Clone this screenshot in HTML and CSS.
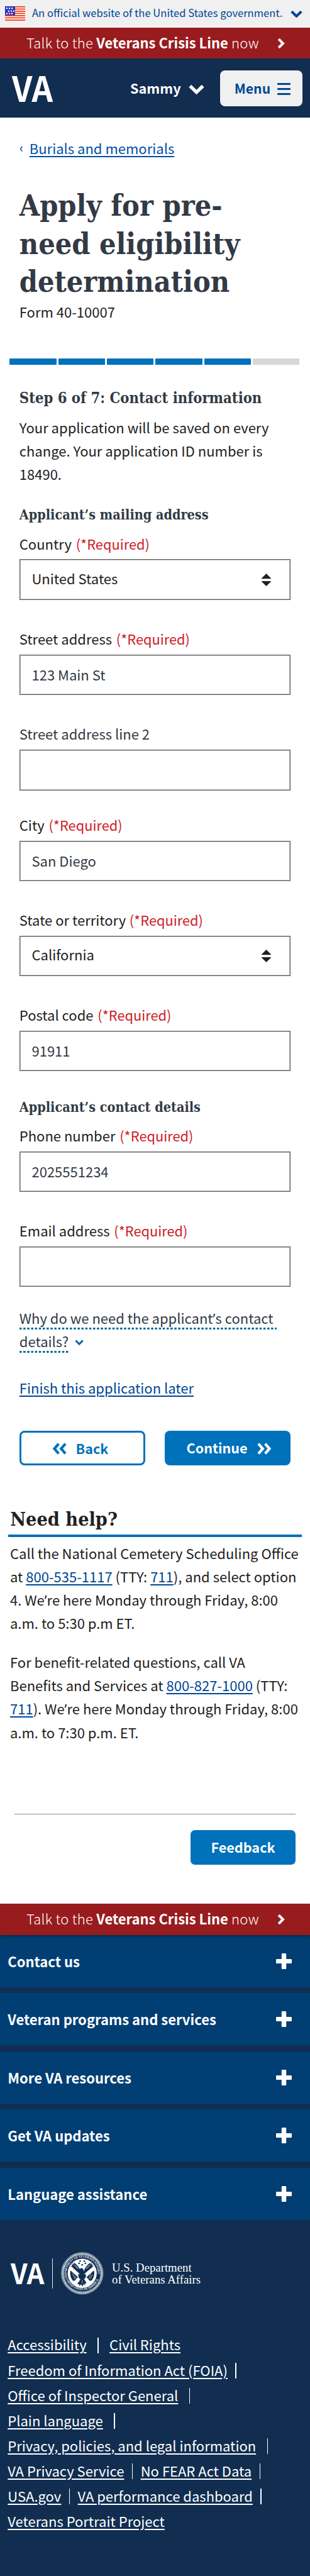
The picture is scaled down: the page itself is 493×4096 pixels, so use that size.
FILE: index.html
```html
<!DOCTYPE html>
<html lang="en">
<head>
<meta charset="utf-8">
<title>Apply for pre-need eligibility determination | Veterans Affairs</title>
<link rel="stylesheet" href="styles.css">
</head>
<body>
<svg class="defs" aria-hidden="true">
  <symbol id="chev-right" viewBox="0 0 12 18"><path d="M2.200 2.200 9 9l-6.800 6.800" fill="none" stroke="currentColor" stroke-width="4"/></symbol>
  <symbol id="chev-down" viewBox="0 0 25 16"><path d="M2.300 2.800 12.500 12.600 22.700 2.800" fill="none" stroke="currentColor" stroke-width="5.400"/></symbol>
  <symbol id="chevs-right" viewBox="0 0 23 19"><path d="M2 1.700 8.800 9.500 2 17.300M12.700 1.700l6.800 7.800-6.800 7.800" fill="none" stroke="currentColor" stroke-width="4.200"/></symbol>
  <symbol id="sort" viewBox="0 0 15 20"><path d="M7.500 0 15 7.400v.8H0v-.8zM0 12h15v.8L7.500 20 0 12.800z" fill="currentColor"/></symbol>
  <symbol id="plus" viewBox="0 0 25 25"><path d="M10 0h5q1.200 0 1.200 1.200v7.800h7.600Q25 9 25 10.200v4.600q0 1.200-1.200 1.200h-7.600v7.800q0 1.200-1.200 1.200h-5q-1.200 0-1.200-1.200V16H1.200Q0 16 0 14.800v-4.600Q0 9 1.200 9h7.600V1.200Q8.800 0 10 0z" fill="currentColor"/></symbol>
</svg>

<div class="gov">
  <svg class="flag" viewBox="0 0 32 23">
    <rect width="32" height="23" fill="#fff"/>
    <path d="M0 .9h32M0 4.400h32M0 7.900h32M0 11.400h32M0 14.900h32M0 18.300h32M0 21.900h32" stroke="#f0350f" stroke-width="1.700"/>
    <rect width="16" height="14.200" fill="#232fb8"/>
    <path d="M1.800 3.200h11.500M4.600 7.600h10.600M1.800 11.600h11.500" stroke="#fff" stroke-width="2.300" stroke-dasharray="2.300 1.800"/>
  </svg>
  <span class="gov-text">An official website of the United States government.</span>
  <svg class="gov-chev"><use href="#chev-down"/></svg>
</div>

<a class="crisis"><span>Talk to the <b>Veterans Crisis Line</b> now</span><svg><use href="#chev-right"/></svg></a>

<header class="header">
  <svg class="logo" viewBox="0 0 66 41"><text x="0" y="40.500" textLength="65" lengthAdjust="spacingAndGlyphs">VA</text></svg>
  <div class="user">Sammy<svg><use href="#chev-down"/></svg></div>
  <button class="menu">Menu<span class="burger"><i></i><i></i><i></i></span></button>
</header>

<main class="main">
  <nav class="crumb"><span class="lt">‹</span><a>Burials and memorials</a></nav>
  <h1>Apply for pre-<br>need eligibility<br>determination</h1>
  <p class="form-no">Form 40-10007</p>
  <div class="progress"><i></i><i></i><i></i><i></i><i></i><i class="todo"></i></div>
  <h2>Step 6 of 7: Contact information</h2>
  <p class="saved">Your application will be saved on every<br>change. Your application ID number is<br>18490.</p>

  <h3 class="h-mail">Applicant’s mailing address</h3>
  <label class="l-country">Country <em>(*Required)</em></label>
  <div class="field select">United States<svg><use href="#sort"/></svg></div>
  <label class="l-street">Street address <em>(*Required)</em></label>
  <div class="field value">123 Main St</div>
  <label class="l-street2">Street address line 2</label>
  <div class="field value"></div>
  <label class="l-city">City <em>(*Required)</em></label>
  <div class="field value">San Diego</div>
  <label>State or territory <em class="tight">(*Required)</em></label>
  <div class="field select">California<svg><use href="#sort"/></svg></div>
  <label>Postal code <em>(*Required)</em></label>
  <div class="field value">91911</div>

  <h3 class="h-contact">Applicant’s contact details</h3>
  <label class="l-phone">Phone number <em>(*Required)</em></label>
  <div class="field value">2025551234</div>
  <label>Email address <em>(*Required)</em></label>
  <div class="field value"></div>

  <p class="why"><span>Why do we need the applicant<span class="apos">’</span>s contact </span><br><span>details?</span><svg><use href="#chev-down"/></svg></p>
  <p class="finish"><a>Finish this application later</a></p>
  <div class="buttons">
    <button class="btn back"><svg><use href="#chevs-right"/></svg>Back</button>
    <button class="btn next">Continue<svg><use href="#chevs-right"/></svg></button>
  </div>
</main>

<section class="help">
  <h2>Need help?</h2>
  <p>Call the National Cemetery Scheduling Office<br>at <a>800-535-1117</a> (TTY: <a>711</a>), and select option<br>4. We<span class="apos">’</span>re here Monday through Friday, 8:00<br>a.m. to 5:30 p.m ET.</p>
  <p>For benefit-related questions, call VA<br>Benefits and Services at <a>800-827-1000</a> (TTY:<br><a>711</a>). We<span class="apos">’</span>re here Monday through Friday, 8:00<br>a.m. to 7:30 p.m. ET.</p>
</section>

<div class="feedback"><button>Feedback</button></div>

<a class="crisis crisis-foot"><span>Talk to the <b>Veterans Crisis Line</b> now</span><svg><use href="#chev-right"/></svg></a>

<footer class="footer">
  <ul class="accordion">
    <li>Contact us<svg><use href="#plus"/></svg></li>
    <li>Veteran programs and services<svg><use href="#plus"/></svg></li>
    <li>More VA resources<svg><use href="#plus"/></svg></li>
    <li>Get VA updates<svg><use href="#plus"/></svg></li>
    <li>Language assistance<svg><use href="#plus"/></svg></li>
  </ul>
  <div class="brand">
    <svg class="brand-va" viewBox="0 0 54 33"><text x="0" y="33" textLength="53.500" lengthAdjust="spacingAndGlyphs">VA</text></svg>
    <span class="brand-rule"></span>
    <svg class="seal" viewBox="0 0 100 100">
      <defs>
        <path id="arc-top" d="M14.500 60A37 37 0 1 1 85.500 60"/>
        <path id="arc-bottom" d="M9.500 57A41.500 41.500 0 0 0 90.500 57"/>
      </defs>
      <circle cx="50" cy="50" r="49" fill="none" stroke="#dfe6ee" stroke-width="1.200"/>
      <circle cx="50" cy="50" r="45.700" fill="none" stroke="#fff" stroke-width="3.600" stroke-dasharray="2.300 1"/>
      <circle cx="50" cy="50" r="43.200" fill="none" stroke="#dfe6ee" stroke-width=".7"/>
      <text class="seal-text"><textPath href="#arc-top" textLength="128">DEPARTMENT OF VETERANS AFFAIRS</textPath></text>
      <text class="seal-text"><textPath href="#arc-bottom" startOffset="6" textLength="98">UNITED STATES OF AMERICA</textPath></text>
      <circle cx="50" cy="50" r="34.300" fill="#fff"/>
      <g fill="#112e51">
        <circle cx="45" cy="21" r="1.900"/><circle cx="55" cy="21" r="1.900"/><circle cx="42.500" cy="26.500" r="1.900"/><circle cx="57.500" cy="26.500" r="1.900"/><circle cx="50" cy="30" r="2"/>
        <path d="M46 45Q43 33 30 24l1.500 4-5-2 2 4-4.500-1 3 4-4-.5 4 5 5 5 6 4 6 5z"/>
        <path d="M54 45Q57 33 70 24l-1.500 4 5-2-2 4 4.500-1-3 4 4-.5-4 5-5 5-6 4-6 5z"/>
        <path d="M44 40q5-5 8 0l3 7 4 6-1 7-7 7-9-6-2-9z"/>
        <path d="M22 43l18 16-4 4q-4 8-9 3-7-9-5-23z"/>
        <path d="M78 43L60 59l4 4q4 8 9 3 7-9 5-23z"/>
        <path d="M45 64l10 0 5 9-4 1 2 4-5-3-2 6-4-5-4 4 0-5-5 1z"/>
      </g>
      <g fill="none" stroke="#fff">
        <path d="M24 35 43 52M76 35 56 52" stroke-width="2.400"/>
        <path d="M27 50l6 14M32 55l4 8M70 50l-4 13M74 53l-5 10M30 29l10 11M70 29 60 40M34 31l7 7M66 31l-7 7M42 62l-6 5M45 65l-4 6M50 66v8" stroke-width=".9"/>
      </g>
    </svg>
    <div class="brand-name">U.S. Department<br>of Veterans Affairs</div>
  </div>
  <div class="links">
    <div><a>Accessibility</a><s class="w"></s><a>Civil Rights</a></div>
    <div><a>Freedom of Information Act (FOIA)</a><s></s></div>
    <div><a>Office of Inspector General</a><s class="w"></s></div>
    <div><a>Plain language</a><s class="w"></s></div>
    <div><a>Privacy, policies, and legal information</a><s class="w"></s></div>
    <div><a>VA Privacy Service</a><s></s><a>No FEAR Act Data</a><s></s></div>
    <div><a>USA.gov</a><s></s><a>VA performance dashboard</a><s></s></div>
    <div><a>Veterans Portrait Project</a></div>
  </div>
</footer>
</body>
</html>
```
FILE: styles.css
```css
* { box-sizing: border-box; margin: 0; padding: 0; }

body {
  width: 493px;
  min-height: 4096px;
  display: flex;
  flex-direction: column;
  background: #fff;
  color: #212121;
  font: 22px/37.13px "Noto Sans CJK SC", "Noto Sans", sans-serif;
  overflow-x: hidden;
}

.defs { position: absolute; width: 0; height: 0; }
button { font: inherit; border: 0; }
a { text-decoration: underline; text-decoration-thickness: 1.5px; text-underline-offset: 2.6px; }
.apos { font-family: "Noto Sans", sans-serif; line-height: 0; }
h1, h2, h3 { font-family: "DejaVu Serif Condensed", "DejaVu Serif", serif; font-weight: 700; color: #323a45; white-space: nowrap; }

/* Government banner */
.gov { display: flex; align-items: center; height: 43.9px; padding: 0 12px 0 7.500px; background: #f0f0f0; color: #004795; }
.flag { width: 32px; height: 23px; flex: none; }
.gov-text { margin-left: 11.500px; padding-bottom: 3px; font-size: 16.6px; white-space: nowrap; }
.gov-chev { width: 19px; height: 12.500px; margin-left: auto; }

/* Crisis line */
.crisis { display: flex; align-items: center; height: 49.400px; padding: 0 40px 0 42px; background: #981b1e; color: #fff; text-decoration: none; font-weight: 300; white-space: nowrap; }
.crisis span { padding-bottom: 1.500px; letter-spacing: .27px; }
.crisis b { font-weight: 700; letter-spacing: 0; }
.crisis svg { width: 12px; height: 18px; margin-left: auto; }
.crisis-foot { height: 49.800px; margin-top: 61.600px; position: relative; box-shadow: 0 2px 5px rgba(0, 0, 0, .35); }

/* Header */
.header { display: flex; align-items: center; height: 94px; padding: 0 12.300px 0 19px; background: #112e51; color: #fff; }
.logo { width: 66px; height: 41px; margin-top: 2px; overflow: visible; }
.logo text, .brand-va text { font-family: "Noto Sans CJK SC", sans-serif; font-weight: 700; fill: #fff; }
.logo text { font-size: 55px; }
.user { display: flex; align-items: center; margin-left: 122px; padding-bottom: 2px; font-weight: 700; font-size: 21.7px; }
.user svg { width: 25px; height: 16px; margin: 6px 0 0 12.700px; }
.menu { display: flex; align-items: center; width: 131px; height: 57px; margin-left: auto; padding: 0 18.700px 2px 23px; border-radius: 8px; background: #f0f0f0; color: #004795; font-size: 21.2px; font-weight: 700; }
.burger { display: flex; flex-direction: column; gap: 4.800px; width: 21.500px; margin-left: auto; padding-top: 5px; }
.burger i { height: 3.200px; border-radius: 1px; background: #004795; }

/* Form column */
.main { padding: 29.900px 30.800px 0; }
.crumb { display: flex; height: 37.100px; color: #0050a8; }
.lt { width: 16px; font-family: "Noto Sans", sans-serif; font-size: 19px; }
h1 { margin-top: 43.100px; font-size: 46.4px; line-height: 60.200px; }
.form-no { height: 37.100px; margin-top: -.6px; }
.progress { display: grid; grid-template-columns: repeat(6, 1fr); gap: 3px; height: 9.200px; margin: 55.900px -14px 0 -15.400px; }
.progress i { background: #0071bb; }
.progress .todo { background: #d6d7d9; }
.main h2 { margin-top: 35.200px; font-size: 23.6px; line-height: 37px; }
.saved { margin-top: 8.800px; }
h3 { font-size: 21.45px; line-height: 37px; }
.h-mail { margin-top: 28.500px; }
.h-contact { margin-top: 38.700px; }

label { display: block; height: 37.100px; margin-top: 42.800px; }
label em { margin-left: 1.900px; font-style: normal; font-size: 21.8px; line-height: 0; color: #cd2026; }
label .tight { margin-left: .6px; }
.l-country, .l-phone { margin-top: 8.400px; }
.l-street, .l-street2 { margin-top: 43.100px; }
.l-street2 { color: #323a45; }
.l-city { margin-top: 36.400px; }
.field { display: flex; align-items: center; height: 64.500px; margin-top: 6.600px; padding: 0 30.500px 0 18.700px; border: 1px solid #5e5e5e; box-shadow: inset 0 0 0 1px rgba(94, 94, 94, .45); }
.value { color: #323a45; padding-bottom: 1px; }
.select { padding-bottom: 4px; }
.select svg { width: 15px; height: 20px; margin: 5px 0 0 auto; }

.why { margin-top: 30.600px; line-height: 37px; color: #323a45; white-space: nowrap; }
.why > span { padding-bottom: 3px; background: linear-gradient(90deg, #046b99 50%, transparent 50%) 0 100% / 6.170px 3px repeat-x; white-space: pre; }
.why svg { width: 14px; height: 9px; margin: 0 0 3px 10px; color: #046b99; }
.finish { height: 37.100px; margin-top: 36.900px; color: #004795; }
.buttons { display: flex; justify-content: space-between; margin-top: 49.700px; }
.btn { display: flex; align-items: center; justify-content: center; width: 200.300px; height: 55.500px; border-radius: 8px; color: #fff; background: #0071bb; font-size: 21.5px; font-weight: 700; padding-bottom: 2px; }
.btn svg { width: 23px; height: 19px; margin-top: 4px; }
.back { padding-right: 7px; border: 3px solid #0071bb; background: #fff; color: #0071bb; padding-bottom: 0; }
.back svg { margin-right: 15px; margin-top: 2px; transform: scaleX(-1); }
.next { padding-left: 4px; }
.next svg { margin-left: 15px; }

/* Help */
.help { padding: 66.100px 13.200px 0; }
.help h2 { padding: 0 3px 4.200px; border-bottom: 4px solid #0071bb; font-size: 30.3px; line-height: 40px; color: #212121; }
.help p { margin-top: 6.600px; padding-left: 2.800px; white-space: nowrap; }
.help p + p { margin-top: 24.700px; }
.help a { color: #004795; }

.feedback { display: flex; justify-content: flex-end; margin: 111px 23.300px 0; padding-top: 25.200px; border-top: 1px solid #8a8a8a; }
.feedback button { width: 166.300px; height: 55.400px; padding-bottom: 1px; border-radius: 7px; background: #0071bb; color: #fff; font-size: 21.6px; font-weight: 700; }

/* Footer */
.footer { flex: 1; background: #112e51; color: #fff; }
.accordion { display: flex; flex-direction: column; gap: 9.400px; list-style: none; }
.accordion li { display: flex; align-items: center; justify-content: space-between; height: 83.100px; padding: 0 29.200px 0 12.300px; background: #003e73; font-weight: 700; }
.accordion svg { width: 25px; height: 25px; }
.brand { display: flex; align-items: center; height: 67.600px; margin: 51.600px 0 0 16.700px; }
.brand-va { width: 54px; height: 33px; overflow: visible; }
.brand-va text { font-size: 44.5px; }
.brand-rule { width: 1px; height: 48.500px; margin-left: 12px; background: #dfe6ee; }
.seal { width: 67.500px; height: 67.500px; margin-left: 13.700px; }
.seal-text { font: 700 7px "Liberation Serif", serif; fill: #fff; }
.brand-name { margin-left: 13.200px; padding-bottom: 1px; font: 18.75px/19px "Liberation Serif", serif; white-space: nowrap; }
.links { margin: 58.600px 0 0 12.300px; line-height: 40.080px; }
.links div { display: flex; align-items: center; height: 40.080px; white-space: nowrap; }
.links s { width: 1.500px; height: 25px; margin: 4px 12.400px 0; background: #fff; }
.links s.w { margin-left: 17.500px; margin-right: 17.500px; }
```
